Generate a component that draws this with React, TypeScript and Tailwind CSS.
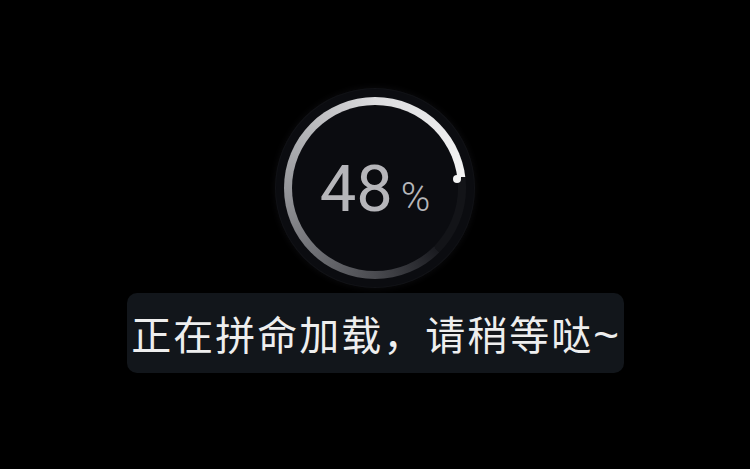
import React from 'react';

const progress = 48;

function ProgressRing({ value }: { value: number }) {
  return (
    <div className="flex h-[198px] w-[198px] items-center justify-center rounded-full bg-[#0b0c10] shadow-[0_0_0_1px_#111216,0_0_6px_2px_#0a0a0c]">
      <div className="relative flex h-[182px] w-[182px] items-center justify-center rounded-full bg-[conic-gradient(from_135deg,#1a1b20_0deg,#4a4b50_45deg,#96979b_135deg,#dcdcde_225deg,#f4f4f4_308deg,#131418_308deg,#131418_360deg)]">
        {/* round cap at the end of the arc */}
        <span className="absolute left-[169px] top-[78px] h-[8px] w-[8px] rounded-full bg-[#f4f4f4]" />
        <div className="flex h-[166px] w-[166px] items-center justify-center rounded-full bg-[#0b0c10]">
          <div className="flex items-baseline pt-[2px] font-['Roboto','Liberation_Sans',sans-serif] text-[#b6b6ba]">
            <span className="text-[65px] leading-none">{value}</span>
            <span className="ml-[8px] text-[40px] font-light leading-none">%</span>
          </div>
        </div>
      </div>
    </div>
  );
}

export default function App() {
  return (
    <div className="flex h-[469px] w-[750px] flex-col items-center bg-black pt-[89px]">
      <ProgressRing value={progress} />
      <div className="mt-[6px] flex h-[80px] w-[497px] items-center justify-center rounded-[10px] bg-[#12161b]">
        <p className="flex items-baseline whitespace-nowrap pt-[3px] font-['Noto_Sans_CJK_SC',sans-serif] text-[40px] leading-none text-[#eeeeee]">
          <span className="tracking-[2px]">正在拼命加载，请稍等哒</span>
          <span className="font-['Liberation_Sans',sans-serif] text-[44px] font-light">~</span>
        </p>
      </div>
    </div>
  );
}
